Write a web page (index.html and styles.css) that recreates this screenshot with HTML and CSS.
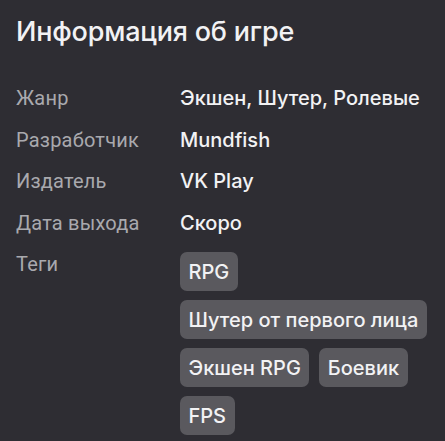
FILE: index.html
```html
<!DOCTYPE html>
<html lang="ru">
<head>
<meta charset="utf-8">
<link rel="stylesheet" href="styles.css">
</head>
<body>
<section class="info">
  <h2 class="title">Информация об игре</h2>
  <dl class="grid">
    <dt class="label">Жанр</dt>
    <dd class="value">Экшен, Шутер, Ролевые</dd>
    <dt class="label">Разработчик</dt>
    <dd class="value">Mundfish</dd>
    <dt class="label">Издатель</dt>
    <dd class="value">VK Play</dd>
    <dt class="label">Дата выхода</dt>
    <dd class="value">Скоро</dd>
    <dt class="label label-tags">Теги</dt>
    <dd class="value tags">
      <span class="tag">RPG</span>
      <span class="tag">Шутер от первого лица</span>
      <span class="tag">Экшен RPG</span>
      <span class="tag">Боевик</span>
      <span class="tag">FPS</span>
    </dd>
  </dl>
</section>
</body>
</html>
```
FILE: styles.css
```css
html, body {
  margin: 0;
  background: #2e2d33;
}
.info {
  padding: 14px 16px 0 16px;
  font-family: Inter, "Noto Sans", sans-serif;
  color: #f2f2f4;
}
.title {
  margin: 0;
  font-size: 27px;
  line-height: 36px;
  font-weight: 500;
  letter-spacing: -0.2px;
}
.grid {
  margin: 36px 0 0 0;
  display: grid;
  grid-template-columns: 164px 1fr;
  row-gap: 17.5px;
}
.label {
  margin: 0;
  font-family: Roboto, "Liberation Sans", sans-serif;
  font-size: 20px;
  line-height: 24px;
  letter-spacing: 0.2px;
  color: #a9a9ae;
}
.value {
  margin: 0;
  font-size: 20px;
  line-height: 24px;
  font-weight: 500;
  letter-spacing: 0;
}
.tags {
  display: flex;
  flex-wrap: wrap;
  gap: 9px 10px;
  margin-top: 0;
}
.tag {
  background: #5a595e;
  border-radius: 7px;
  padding: 7.5px 8.5px;
  line-height: 24px;
}
```
